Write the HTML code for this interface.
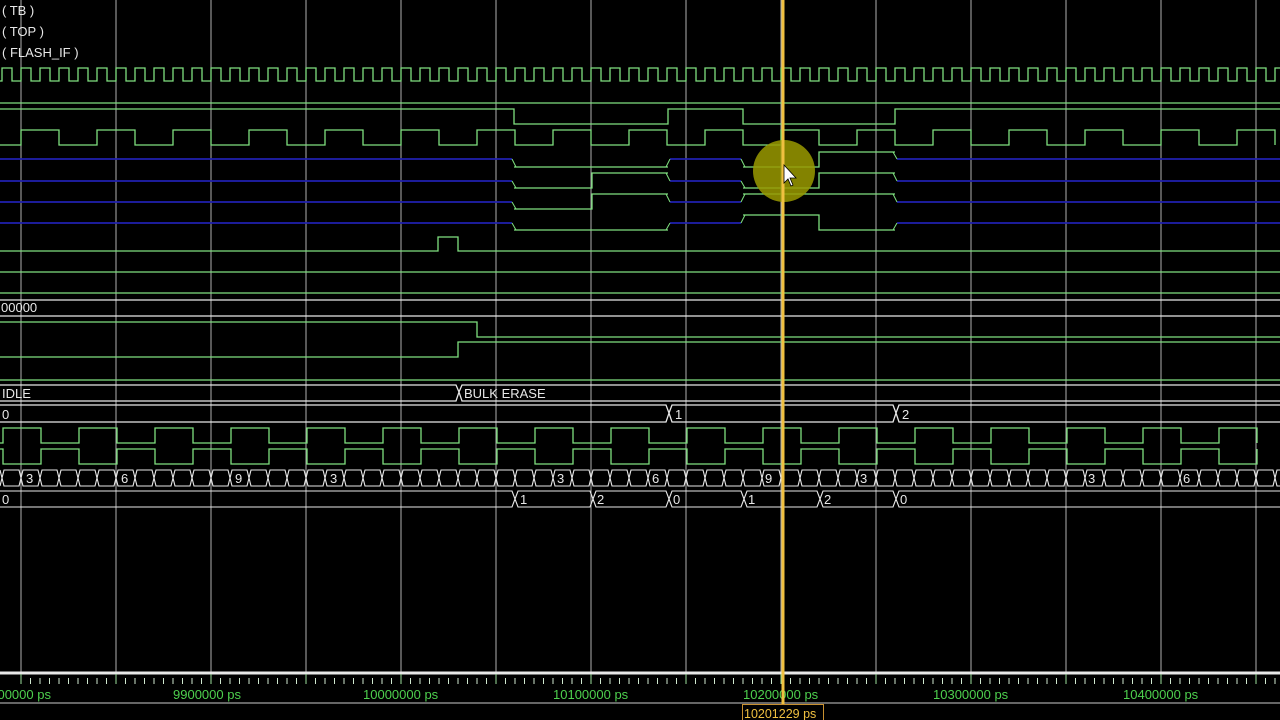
<!DOCTYPE html>
<html><head><meta charset="utf-8"><style>
html,body{margin:0;padding:0;background:#000;width:1280px;height:720px;overflow:hidden}
svg{display:block}
text{font-family:"Liberation Sans",sans-serif}
</style></head><body>
<svg id="s" width="1280" height="720" xmlns="http://www.w3.org/2000/svg"></svg>
<script>
const s=document.getElementById('s');let h='';
const G='#7fe07f',W='#e8e8e8',B='#2020b0',GR='#b0b0b0';
function L(d,c,w){h+=`<path d="${d}" stroke="${c}" stroke-width="${w||1.3}" fill="none"/>`;}
function T(x,y,t,c,sz){h+=`<text x="${x}" y="${y}" fill="${c||W}" font-size="${sz||13}">${t}</text>`;}
for(let x=21;x<1280;x+=95)L(`M${x} 0V672`,GR,1);
T(2,15,'( TB )');T(2,36,'( TOP )');T(2,57,'( FLASH_IF )');
let d='M0 81';for(let x=2;x<1290;x+=19){d+=`H${x}V68H${x+10}V81`;}L(d,G);
L('M0 103H1280',G);
L('M0 109H514V124H668V109H743V124H895V109H1280',G);
d='M0 145';for(let x=21;x<1290;x+=76){d+=`H${x}V130H${x+38}V145`;}L(d,G);
const segs=[[159,[[514,592,167,167],[743,819,167,152]]],[181,[[514,592,188,173],[743,819,188,173]]],[202,[[514,592,209,194],[743,819,194,194]]],[223,[[514,592,230,230],[743,819,215,230]]]];
for(const [by,ss] of segs){
 L(`M0 ${by}H512M670 ${by}H741M897 ${by}H1280`,B,1.8);
 L(`M514 ${ss[0][2]}H${ss[0][1]}V${ss[0][3]}H668M743 ${ss[1][2]}H${ss[1][1]}V${ss[1][3]}H895`,G);
 L(`M512 ${by}L516 ${ss[0][2]}M670 ${by}L666 ${ss[0][3]}M741 ${by}L745 ${ss[1][2]}M897 ${by}L893 ${ss[1][3]}`,G,1);
}
L('M0 251H438V237H458V251H1280',G);
L('M0 272H1280',G);
L('M0 293H1280',G);L('M0 300H1280',W);L('M0 316H1280',W);T(1,312,'00000');
L('M0 322H477V337H1280',G);
L('M0 357H458V342H1280',G);
L('M0 380H1280',G);
L('M0 385H456L459 392L462 385H1280M0 401H456L459 392L462 401H1280',W);
T(2,398,'IDLE');T(464,398,'BULK ERASE');
L('M0 405H666L669 413L672 405H893L896 413L899 405H1280M0 422H666L669 413L672 422H893L896 413L899 422H1280',W);
T(2,419,'0');T(675,419,'1');T(902,419,'2');
let a='M0 443',b='M0 449';for(let x=3;x<1290;x+=76){a+=`H${x}V428H${x+38}V443`;b+=`H${x}V464H${x+38}V449`;}L(a,G);L(b,G);
let c1='M0 470',c2='M0 486';for(let x=2;x<1290;x+=19){c1+=`H${x-2}L${x} 478L${x+2} 470`;c2+=`H${x-2}L${x} 478L${x+2} 486`;}c1+='H1280';c2+='H1280';L(c1,W,1.1);L(c2,W,1.1);
[[26,'3'],[121,'6'],[235,'9'],[330,'3'],[557,'3'],[652,'6'],[765,'9'],[860,'3'],[1088,'3'],[1183,'6']].forEach(p=>T(p[0],483,p[1]));
let xs=[514,592,668,743,819,895];let e1='M0 491',e2='M0 507';for(const x of xs){e1+=`H${x-2}L${x+1} 499L${x+4} 491`;e2+=`H${x-2}L${x+1} 499L${x+4} 507`;}e1+='H1280';e2+='H1280';L(e1,W,1.1);L(e2,W,1.1);
T(2,504,'0');[[520,'1'],[597,'2'],[673,'0'],[748,'1'],[824,'2'],[900,'0']].forEach(p=>T(p[0],504,p[1]));
L('M0 673H1280',W,3);
for(let i=0;i<140;i++){let x=21+i*9.5;if(x>1280)break;let mj=i%10==0;L(`M${x} ${mj?674:678}V684`,mj?'#9be09b':'#cfe8cf',1);}
for(let i=-2;i<7;i++){let x=211+i*190;T(x-38,699,(9900000+i*100000)+' ps','#4ed04e',13);}
L('M0 703H1280','#888',1.5);
h+=`<circle cx="784" cy="171" r="31" fill="#9a9a00" opacity="0.85"/>`;
L('M783 0V704','#f0c040',3);
h+=`<path d="M784 165V183L788 179L791 186L793 185L790 178L796 178Z" fill="#fff" stroke="#000" stroke-width="0.8"/>`;
h+=`<rect x="742.5" y="704.5" width="81" height="16" fill="#000" stroke="#c89030"/>`;
T(744,718,'10201229 ps','#f0c040',12.5);
s.innerHTML=h;
</script>
</body></html>
